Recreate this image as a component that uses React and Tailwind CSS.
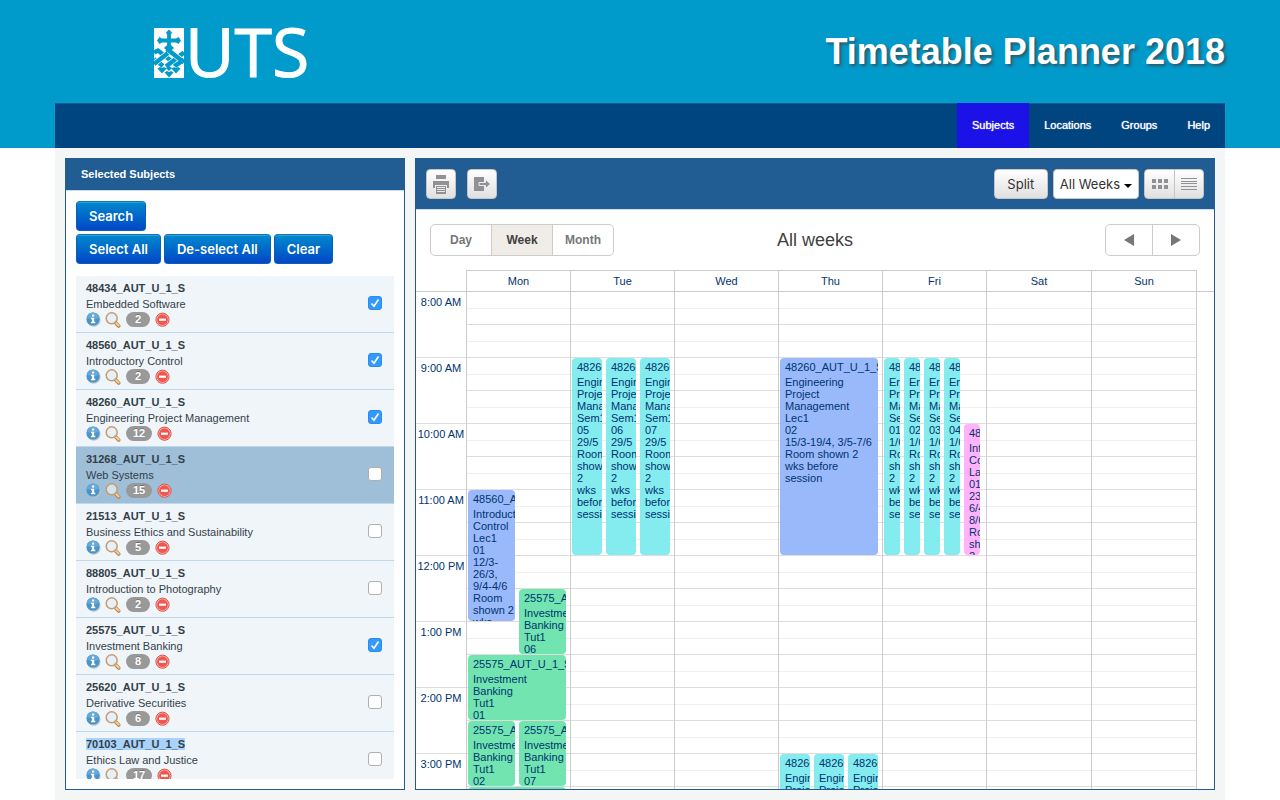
const NAV = ["Subjects", "Locations", "Groups", "Help"];

const SUBJECTS = [
  { code: "48434_AUT_U_1_S", name: "Embedded Software", count: 2, on: true },
  { code: "48560_AUT_U_1_S", name: "Introductory Control", count: 2, on: true },
  { code: "48260_AUT_U_1_S", name: "Engineering Project Management", count: 12, on: true },
  { code: "31268_AUT_U_1_S", name: "Web Systems", count: 15, active: true },
  { code: "21513_AUT_U_1_S", name: "Business Ethics and Sustainability", count: 5 },
  { code: "88805_AUT_U_1_S", name: "Introduction to Photography", count: 2 },
  { code: "25575_AUT_U_1_S", name: "Investment Banking", count: 8, on: true },
  { code: "25620_AUT_U_1_S", name: "Derivative Securities", count: 6 },
  { code: "70103_AUT_U_1_S", name: "Ethics Law and Justice", count: 17, marked: true },
];

const HOURS = [
  "8:00 AM", "9:00 AM", "10:00 AM", "11:00 AM", "12:00 PM",
  "1:00 PM", "2:00 PM", "3:00 PM",
];

const TEAL = "bg-[#84ebef]";
const BLUE = "bg-[#99b9fb]";
const GREEN = "bg-[#71e4b0]";
const PINK = "bg-[#ffb3fb]";

const seminar = (group, date) => [
  "Engineering", "Project", "Management", "Sem1", group, date,
  "Room", "shown", "2", "wks", "before", "session",
];
const tutorial = (group) => ["Investment", "Banking", "Tut1", group];
const EPM = "48260_AUT_U_1_S";
const BANK = "25575_AUT_U_1_S";

// start and end are half-hour slots counted from 8:00 AM
const DAYS = [
  {
    name: "Mon",
    lanes: 2,
    pad: "pr-1",
    events: [
      { lane: 1, span: 1, start: 6, end: 10, color: BLUE, title: "48560_AUT_U_1_S", lines: ["Introductory", "Control", "Lec1", "01", "12/3-", "26/3,", "9/4-4/6", "Room", "shown 2", "wks"] },
      { lane: 2, span: 1, start: 9, end: 11, color: GREEN, title: BANK, lines: tutorial("06") },
      { lane: 1, span: 2, start: 11, end: 13, color: GREEN, title: BANK, lines: tutorial("01") },
      { lane: 1, span: 1, start: 13, end: 15, color: GREEN, title: BANK, lines: tutorial("02") },
      { lane: 2, span: 1, start: 13, end: 15, color: GREEN, title: BANK, lines: tutorial("07") },
      { lane: 1, span: 2, start: 15, end: 17, color: GREEN, title: "", lines: [] },
    ],
  },
  {
    name: "Tue",
    lanes: 3,
    pad: "pr-1",
    events: ["05", "06", "07"].map((g, i) => ({
      lane: i + 1, span: 1, start: 2, end: 8, color: TEAL, title: EPM, lines: seminar(g, "29/5"),
    })),
  },
  { name: "Wed", lanes: 1, pad: "pr-1", events: [] },
  {
    name: "Thu",
    lanes: 3,
    pad: "pr-1",
    events: [
      { lane: 1, span: 3, start: 2, end: 8, color: BLUE, title: EPM, lines: ["Engineering", "Project", "Management", "Lec1", "02", "15/3-19/4, 3/5-7/6", "Room shown 2", "wks before", "session"] },
      ...[1, 2, 3].map((lane) => ({
        lane, span: 1, start: 14, end: 18, color: TEAL, title: EPM, lines: ["Engineering", "Project"],
      })),
    ],
  },
  {
    name: "Fri",
    lanes: 5,
    pad: "pr-[6px]",
    events: [
      ...["01", "02", "03", "04"].map((g, i) => ({
        lane: i + 1, span: 1, start: 2, end: 8, color: TEAL, title: EPM, lines: seminar(g, "1/6"),
      })),
      { lane: 5, span: 1, start: 4, end: 8, color: PINK, title: "48560_AUT_U_1_S", lines: ["Introductory", "Control", "Lab1", "01", "23/3,", "6/4-", "8/6", "Room", "shown", "2"] },
    ],
  },
  { name: "Sat", lanes: 1, pad: "pr-1", events: [] },
  { name: "Sun", lanes: 1, pad: "pr-1", events: [] },
];

function Crest() {
  return (
    <svg viewBox="0 0 30 50" className="h-[50px] w-[30px]" aria-hidden="true">
      <rect width="30" height="50" fill="#fff" />
      <g fill="none">
        <path d="M0 24.500 L4 22.500 L18 33.500 L23 37.500 M0 31 L9 38" stroke="#009acb" strokeWidth="4.400" />
        <path d="M12 38.500 L30 24.500 M0 36 L16 23.500" stroke="#fff" strokeWidth="5.800" />
        <path d="M12 38.500 L30 24.500 M0 36 L16 23.500" stroke="#009acb" strokeWidth="4.400" />
        <path d="M15 22.500 L30 34.500" stroke="#fff" strokeWidth="5.800" />
        <path d="M13 21 L30 34.500 M21 38 L30 31.500" stroke="#009acb" strokeWidth="4.400" />
      </g>
      <g fill="#009acb">
        <path d="M15 1.500 L18 4.500 L16.900 6.500 V10.500 H22 L24.500 9 L27 12.500 L24.500 16 L22 14.500 H16.900 V17 L20 20 L15 24.500 L10 20 L13.100 17 V14.500 H8 L5.500 16 L3 12.500 L5.500 9 L8 10.500 H13.100 V6.500 L12 4.500 Z" />
        <path d="M15 44 l2-1 2.500 1.500 -4.500 5 -4.500-5 2.500-1.500z M8 40 l2-1 2.500 1.500 -4.500 5 -4.500-5 2.500-1.500z M22 40 l2-1 2.500 1.500 -4.500 5 -4.500-5 2.500-1.500z M15 38 l3 2 -3 3 -3-3z" />
      </g>
    </svg>
  );
}

function InfoIcon() {
  return (
    <svg viewBox="0 0 15 15" className="size-[15px]" aria-hidden="true">
      <circle cx="7.800" cy="7.900" r="6.800" fill="#b9c6cf" />
      <circle cx="7" cy="7" r="6.600" fill="#4a94c8" />
      <path d="M1 6 a6 5.600 0 0 1 12 0 q-6 2-12 0z" fill="#66a9d6" />
      <path d="M6 2.600h2.200v1.900H6z M5 5.800h3.200v4h1.100v1.400H5V9.800h1.100V7.200H5z" fill="#fff" />
    </svg>
  );
}

function SearchIcon() {
  return (
    <svg viewBox="0 0 16 16" className="size-4" aria-hidden="true">
      <path d="M10.300 10.500 L13.700 14" stroke="#b9824c" strokeWidth="3.600" strokeLinecap="round" />
      <path d="M10.800 10.800 L13.700 13.700" stroke="#f4d6a0" strokeWidth="1.800" strokeLinecap="round" />
      <circle cx="6.700" cy="6.300" r="5.500" fill="#e3eef7" fillOpacity="0.75" stroke="#c99b6c" strokeWidth="1.500" />
    </svg>
  );
}

function RemoveIcon() {
  return (
    <svg viewBox="0 0 15 15" className="size-[15px]" aria-hidden="true">
      <circle cx="7.500" cy="7.700" r="6.600" fill="#fbb5ac" stroke="#d9534c" strokeWidth="1" />
      <circle cx="7.500" cy="7.700" r="5.400" fill="#ee5850" />
      <rect x="4" y="6.600" width="7" height="2.200" fill="#fff" />
    </svg>
  );
}

function PrimaryButton({ children }) {
  return (
    <button className="h-[30px] rounded-[4px] border border-[#0560b8] border-t-[#0a76bd] bg-linear-to-b from-[#0088cc] to-[#0a45c6] px-3 pt-px font-[Inter,sans-serif] text-[13px] font-semibold text-white shadow-[inset_0_1px_0_rgba(255,255,255,0.2)]">
      {children}
    </button>
  );
}

function Subject({ item }) {
  return (
    <li
      className={
        "flex h-[57px] items-start justify-between border-b border-[#bfd9ec] pt-1 pr-3 pl-[10px] " +
        (item.active ? "bg-[#9fbed8]" : "bg-[#f0f5fa]")
      }
    >
      <div className="text-[11px] leading-4 text-[#333f48]">
        <label htmlFor={item.code} className="block font-bold">
          <span className={item.marked ? "bg-[#a9d3fb]" : ""}>{item.code}</span>
        </label>
        <p>{item.name}</p>
        <div className="flex h-[15px] items-center">
          <button aria-label={"About " + item.name}><InfoIcon /></button>
          <button aria-label={"Search " + item.name} className="ml-1"><SearchIcon /></button>
          <span className="ml-[5px] h-[15px] min-w-6 rounded-full bg-[#999999] px-[7px] text-center leading-[15px] font-bold text-white [text-shadow:0_-1px_0_rgba(0,0,0,0.25)]">
            {item.count}
          </span>
          <button aria-label={"Remove " + item.name} className="ml-[5px]"><RemoveIcon /></button>
        </div>
      </div>
      <span className="mt-4 grid size-[14px] [&>*]:[grid-area:1/1]">
        <input
          id={item.code}
          type="checkbox"
          defaultChecked={item.on}
          className="peer size-[14px] appearance-none rounded-[3px] border border-[#b0b0b0] bg-white checked:border-[#2a8cf3] checked:bg-[#3399fb]"
        />
        <svg viewBox="0 0 14 14" className="pointer-events-none hidden size-[14px] peer-checked:block" aria-hidden="true">
          <path d="M3.500 7.500 L6 10.200 L10.500 3.500" fill="none" stroke="#fff" strokeWidth="1.600" />
        </svg>
      </span>
    </li>
  );
}

function EventCard({ event }) {
  return (
    <article
      className={"mb-px overflow-hidden rounded-[4px] pt-[3px] pl-[5px] text-[11px] leading-3 whitespace-nowrap " + event.color}
      style={{
        gridColumn: `${event.lane} / span ${event.span}`,
        gridRow: `${event.start + 1} / ${event.end + 1}`,
      }}
    >
      <h3 className="mb-[3px]">{event.title}</h3>
      {event.lines.map((line, i) => (
        <p key={i}>{line}</p>
      ))}
    </article>
  );
}

function DayColumn({ day }) {
  return (
    <div className="grid [&>*]:[grid-area:1/1]">
      <div>
        {HOURS.map((hour) => (
          <div key={hour}>
            <div className="h-[17px] border-b border-[#efefef]" />
            <div className="h-4 border-b border-[#dddddd]" />
            <div className="h-[17px] border-b border-[#efefef]" />
            <div className="h-4 border-b border-[#dddddd]" />
          </div>
        ))}
      </div>
      <div
        className={"grid auto-rows-[33px] gap-x-1 pl-px " + day.pad}
        style={{ gridTemplateColumns: `repeat(${day.lanes}, minmax(0, 1fr))` }}
      >
        {day.events.map((event, i) => (
          <EventCard key={i} event={event} />
        ))}
      </div>
    </div>
  );
}

const TOOL =
  "flex h-[30px] items-center justify-center border border-[#c5c5c5] bg-linear-to-b from-white to-[#e0e0e0]";

function Toolbar() {
  return (
    <div className="flex h-[51px] shrink-0 items-center justify-between border-b border-[#c5ddee] bg-[#215d93] px-[10px]">
      <div className="flex gap-[11px]">
        <button aria-label="Print" className={TOOL + " w-[30px] rounded-[4px]"}>
          <svg viewBox="0 0 16 20" className="h-5 w-4" fill="#909095" aria-hidden="true">
            <path d="M3 1h10v4H3z M0 7h16v7h-2v-3H2v3H0z" />
            <path d="M3 12h10v8H3z M4 13v1h8v-1z M4 15v1h8v-1z M4 17v1h8v-1z" fillRule="evenodd" />
          </svg>
        </button>
        <button aria-label="Export" className={TOOL + " w-[30px] rounded-[4px]"}>
          <svg viewBox="0 0 18 16" className="h-4 w-[18px]" aria-hidden="true">
            <path d="M1 1h10v14H1z" fill="#909095" />
            <path d="M6 6.500h6.500V3.500L17.500 8l-5 4.500v-3H6z" fill="#909095" stroke="#ededed" strokeWidth="1" />
          </svg>
        </button>
      </div>
      <div className="flex gap-[5px] font-[Inter,sans-serif] text-[13px] text-[#333333]">
        <button className={TOOL + " w-[54px] rounded-[4px] pt-px"}>Split</button>
        <button className="flex h-[30px] items-center gap-1 rounded-[4px] border border-[#c5c5c5] bg-white px-[6px] pt-px">
          All Weeks
          <svg viewBox="0 0 8 4" className="mt-[2px] h-1 w-2" aria-hidden="true"><path d="M0 0h8L4 4z" fill="#000" /></svg>
        </button>
        <div className="flex">
          <button aria-label="Calendar view" className={TOOL + " w-[31px] rounded-l-[4px]"}>
            <svg viewBox="0 0 16 10" className="h-[10px] w-4" fill="#909095" aria-hidden="true">
              <path d="M0 0h4v4H0z M6 0h4v4H6z M12 0h4v4h-4z M0 6h4v4H0z M6 6h4v4H6z M12 6h4v4h-4z" />
            </svg>
          </button>
          <button aria-label="List view" className={TOOL + " -ml-px w-[30px] rounded-r-[4px]"}>
            <svg viewBox="0 0 16 12" className="h-3 w-4" fill="#909095" aria-hidden="true">
              <path d="M0 0h16v1H0z M0 3h16v1H0z M0 5h16v1H0z M0 8h16v1H0z M0 11h16v1H0z" />
            </svg>
          </button>
        </div>
      </div>
    </div>
  );
}

function CalendarHeader() {
  return (
    <div className="grid shrink-0 grid-cols-3 items-center p-[14px]">
      <div className="flex h-8 w-[184px] divide-x divide-[#cccccc] overflow-hidden rounded-[5px] border border-[#cccccc] text-[12px] font-bold text-[#777777]">
        <button className="flex-1">Day</button>
        <button className="flex-1 bg-[#f0ece7] text-[#404040]">Week</button>
        <button className="flex-1">Month</button>
      </div>
      <h2 className="text-center text-[18px] leading-8 text-[#404040]">All weeks</h2>
      <div className="flex h-8 w-[95px] divide-x divide-[#cccccc] justify-self-end overflow-hidden rounded-[5px] border border-[#cccccc]">
        <button aria-label="Previous" className="flex flex-1 items-center justify-center">
          <svg viewBox="0 0 10 12" className="h-3 w-[10px]" aria-hidden="true"><path d="M10 0v12L0 6z" fill="#777" /></svg>
        </button>
        <button aria-label="Next" className="flex flex-1 items-center justify-center">
          <svg viewBox="0 0 10 12" className="h-3 w-[10px]" aria-hidden="true"><path d="M0 0v12l10-6z" fill="#777" /></svg>
        </button>
      </div>
    </div>
  );
}

const COLUMNS = [
  "w-[104px]", "w-[104px]", "w-[104px]", "w-[104px]", "w-[104px]", "w-[105px]", "w-[106px]",
];

function Calendar() {
  return (
    <div className="min-h-0 flex-1 overflow-y-auto text-[#003470] [scrollbar-width:none]">
      <div className="flex">
        <table className="w-full table-fixed border-separate border-spacing-0 text-[11px]">
          <thead>
            <tr className="h-[22px]">
              <th className="w-[50px] border-b border-[#cccccc] p-0" aria-label="Time" />
              {DAYS.map((day, i) => (
                <th
                  key={day.name}
                  className={"border-y border-l border-[#cccccc] p-0 leading-5 font-normal last:border-r " + COLUMNS[i]}
                >
                  {day.name}
                </th>
              ))}
            </tr>
          </thead>
          <tbody>
            <tr>
              <td className="p-0 align-top">
                {HOURS.map((hour) => (
                  <div key={hour} className="h-[66px] border-b border-[#dddddd] pt-[2px] text-center leading-4">
                    {hour}
                  </div>
                ))}
              </td>
              {DAYS.map((day) => (
                <td key={day.name} className="border-l border-[#cccccc] p-0 align-top last:border-r">
                  <DayColumn day={day} />
                </td>
              ))}
            </tr>
          </tbody>
        </table>
        <div className="h-[22px] w-[17px] shrink-0 border-b border-[#cccccc]" />
      </div>
    </div>
  );
}

export default function App() {
  return (
    <div className="flex h-screen flex-col bg-white font-['Liberation_Sans',Arial,sans-serif]">
      <header className="shrink-0 bg-[#009acb]">
        <div className="mx-auto w-full max-w-[1170px]">
          <div className="flex h-[103px] items-center justify-between pt-[3px]">
            <a href="#home" aria-label="UTS home" className="ml-[99px] flex items-start gap-px text-white">
              <Crest />
              <span className="font-['Open_Sans',sans-serif] text-[68px] leading-[46px] font-medium [-webkit-text-stroke:1px_#fff]">UTS</span>
            </a>
            <h1 className="pb-[2px] text-[36px] leading-10 font-bold text-white [text-shadow:2px_2px_3px_rgba(60,60,60,0.7)]">
              Timetable Planner 2018
            </h1>
          </div>
          <nav className="flex h-[45px] justify-end bg-[#004480] shadow-[inset_0_1px_0_#1b5a8f]">
            {NAV.map((item, i) => (
              <a
                key={item}
                href={"#" + item.toLowerCase()}
                className={
                  "flex items-center px-[15px] text-[11px] text-white [text-shadow:0_0_1px_#fff] " +
                  (i === 0 ? "bg-[#1b12e8]" : "")
                }
              >
                {item}
              </a>
            ))}
          </nav>
        </div>
      </header>

      <main className="mx-auto flex min-h-0 w-full max-w-[1170px] flex-1 gap-[10px] bg-[#f4f6f6] p-[10px]">
        <section className="flex w-[340px] shrink-0 flex-col border border-[#215d93] bg-white">
          <h2 className="flex h-8 shrink-0 items-center border-b border-[#c5ddee] bg-[#215d93] px-[15px] text-[11px] font-bold text-white">
            Selected Subjects
          </h2>
          <div className="flex min-h-0 flex-1 flex-col p-[10px]">
            <div className="flex flex-col gap-[3px]">
              <div className="flex"><PrimaryButton>Search</PrimaryButton></div>
              <div className="flex gap-[3px]">
                <PrimaryButton>Select All</PrimaryButton>
                <PrimaryButton>De-select All</PrimaryButton>
                <PrimaryButton>Clear</PrimaryButton>
              </div>
            </div>
            <ul className="mt-3 min-h-0 flex-1 overflow-y-auto [scrollbar-width:none]">
              {SUBJECTS.map((item) => (
                <Subject key={item.code} item={item} />
              ))}
            </ul>
          </div>
        </section>

        <section className="flex min-w-0 flex-1 flex-col border border-[#215d93] bg-white">
          <Toolbar />
          <CalendarHeader />
          <Calendar />
        </section>
      </main>
    </div>
  );
}
